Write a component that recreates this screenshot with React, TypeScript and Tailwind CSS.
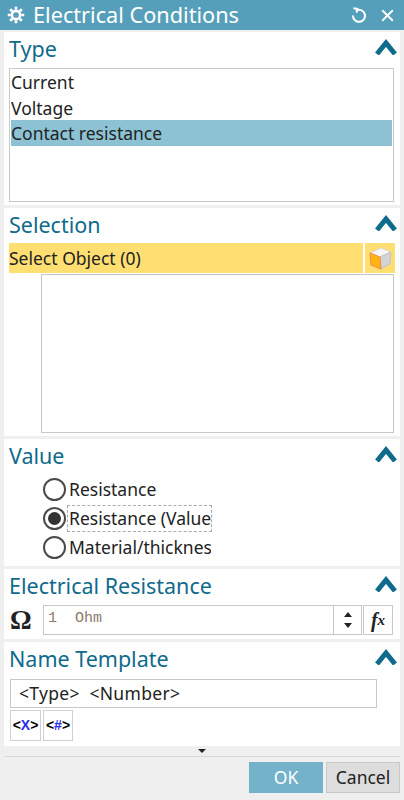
import { X } from "lucide-react";

const FONT = "font-['Noto_Sans','Open_Sans',sans-serif]";

function Chevron() {
  return (
    <svg width="22" height="16" viewBox="0 0 22 16" className="mb-[3px] shrink-0">
      <path d="M2 15 L11 4 L20 15" fill="none" stroke="#0f6a8c" strokeWidth="5" />
    </svg>
  );
}

function Gear() {
  return (
    <svg width="18" height="18" viewBox="0 0 24 24" fill="none" stroke="#fff" strokeWidth="3.4">
      <circle cx="12" cy="12" r="5.5" />
      <path
        d="M12 1v4M12 19v4M1 12h4M19 12h4M4.2 4.2l2.9 2.9M16.9 16.9l2.9 2.9M4.2 19.8l2.9-2.9M16.9 7.1l2.9-2.9"
        strokeWidth="3.6"
      />
    </svg>
  );
}

function ResetIcon() {
  return (
    <svg width="16" height="16" viewBox="0 0 16 16" fill="none" stroke="#fff" strokeWidth="2">
      <path d="M5 3.6 A6 6 0 1 1 2 8.5" />
      <path d="M2.2 1.6 L6 1.6 L6 5.4" transform="rotate(8 5 3)" />
    </svg>
  );
}

function Cube() {
  return (
    <svg width="24" height="24" viewBox="0 0 24 24">
      <path d="M2 7 L13 2 L23 6 L12 11 Z" fill="#f6f6f6" stroke="#cfcfcf" strokeWidth="0.8" />
      <path d="M12 11 L23 6 L22 18 L13 23 Z" fill="#d3d3d6" stroke="#bdbdc0" strokeWidth="0.8" />
      <path d="M2 7 L12 11 L13 23 L3 19 Z" fill="#ffb416" stroke="#f58a3c" strokeWidth="1" />
    </svg>
  );
}

function Panel({
  title,
  h,
  children,
}: {
  title: string;
  h: string;
  children: React.ReactNode;
}) {
  return (
    <section className={`mx-[4px] bg-white ${h}`}>
      <div className="flex h-[33px] items-center justify-between pl-[5px] pr-[3px]">
        <span className="text-[21.5px] leading-none text-[#0f6a8c]">{title}</span>
        <Chevron />
      </div>
      {children}
    </section>
  );
}

function Radio({ label, checked }: { label: string; checked?: boolean }) {
  return (
    <div className="flex h-[29px] items-center">
      <span className="flex h-[23px] w-[23px] shrink-0 items-center justify-center rounded-full border-2 border-[#4a4a4a] bg-white">
        {checked && <span className="h-[13px] w-[13px] rounded-full bg-[#333]" />}
      </span>
      <span
        className={`ml-[1px] flex h-[27px] w-[145px] items-center overflow-hidden whitespace-nowrap pl-[1px] text-[17.5px] text-[#222] ${
          checked ? "border border-dashed border-[#aaa]" : "border border-transparent"
        }`}
      >
        {label}
      </span>
    </div>
  );
}

export default function App() {
  return (
    <div className={`flex h-[800px] w-[404px] flex-col overflow-hidden bg-[#efefef] ${FONT}`}>
      <header className="flex h-[30px] items-center bg-[#569fba] pl-[7px] pr-[7px] text-white">
        <Gear />
        <span className="ml-[8px] text-[21.7px] leading-none">Electrical Conditions</span>
        <div className="ml-auto flex items-center gap-[11px]">
          <ResetIcon />
          <X size={19} strokeWidth={2.4} />
        </div>
      </header>

      <div className="mt-[2px] flex flex-col gap-[3px]">
        <Panel title="Type" h="h-[173px]">
          <div className="mx-[5px] mt-[3px] h-[134px] w-[385px] border border-[#c8c8c8] px-[1px] text-[17.5px] leading-[26px] text-[#222]">
            <div>Current</div>
            <div>Voltage</div>
            <div className="-mt-[1px] bg-[#8cc2d3]">Contact resistance</div>
          </div>
        </Panel>

        <Panel title="Selection" h="h-[228px]">
          <div className="ml-[5px] mt-[2px] flex h-[30px] w-[386px] gap-[2px]">
            <div className="flex flex-1 items-center bg-[#ffdf72] text-[17.5px] text-[#222]">
              Select Object (0)
            </div>
            <div className="flex w-[30px] items-center justify-center bg-[#ffdf72]">
              <Cube />
            </div>
          </div>
          <div className="ml-[37px] mt-[1px] h-[159px] w-[353px] border border-[#c8c8c8]" />
        </Panel>

        <Panel title="Value" h="h-[127px]">
          <div className="ml-[39px] mt-[3px] flex flex-col">
            <Radio label="Resistance" />
            <Radio label="Resistance (Value" checked />
            <Radio label="Material/thicknes" />
          </div>
        </Panel>

        <Panel title="Electrical Resistance" h="h-[70px]">
          <div className="mt-[3px] flex h-[30px] items-center">
            <span className="w-[39px] pl-[6px] font-['Liberation_Serif',serif] text-[27px] font-bold leading-none text-[#222]">
              Ω
            </span>
            <div className="flex h-[30px] w-[319px] border border-[#c8c8c8]">
              <span className="flex-1 whitespace-pre pl-[4px] font-['Liberation_Mono',monospace] text-[15px] leading-[26px] text-[#8a7a6a]">
                {"1  Ohm"}
              </span>
              <div className="flex w-[28px] flex-col items-center justify-center gap-[6px] border-l border-[#c8c8c8]">
                <span className="h-0 w-0 border-x-[4px] border-b-[5px] border-x-transparent border-b-[#222]" />
                <span className="h-0 w-0 border-x-[4px] border-t-[5px] border-x-transparent border-t-[#222]" />
              </div>
            </div>
            <button
              type="button"
              className="ml-[1px] flex h-[30px] w-[30px] items-center justify-center border border-[#c8c8c8] bg-white font-['Liberation_Serif',serif] text-[20px] font-bold italic leading-none text-[#222]"
            >
              f<span className="text-[15px]">x</span>
            </button>
          </div>
        </Panel>

        <Panel title="Name Template" h="h-[104px]">
          <div className="ml-[6px] mt-[4px] flex h-[29px] w-[367px] items-center whitespace-pre border border-[#c8c8c8] pl-[8px] text-[17.5px] tracking-[0.3px] text-[#222]">
            {"<Type>  <Number>"}
          </div>
          <div className="ml-[6px] mt-[2px] flex gap-[2px]">
            <button
              type="button"
              className="flex h-[31px] w-[31px] items-center justify-center border border-[#d0d0d0] bg-white font-['Liberation_Sans',sans-serif] text-[14px] font-bold"
            >
              <span className="text-black">{"<"}</span>
              <span className="text-[#2a2af0]">X</span>
              <span className="text-black">{">"}</span>
            </button>
            <button
              type="button"
              className="flex h-[31px] w-[30px] items-center justify-center border border-[#d0d0d0] bg-white font-['Liberation_Sans',sans-serif] text-[14px] font-bold"
            >
              <span className="text-black">{"<"}</span>
              <span className="text-[#2a2af0]">#</span>
              <span className="text-black">{">"}</span>
            </button>
          </div>
        </Panel>
      </div>

      <div className="mx-[4px] flex h-[11px] items-center justify-center border-b border-[#d8d8d8]">
        <span className="h-0 w-0 border-x-[4px] border-t-[4px] border-x-transparent border-t-[#222]" />
      </div>

      <footer className="mr-[4px] mt-[5px] flex justify-end gap-[3px] text-[17.5px]">
        <button type="button" className="h-[31px] w-[74px] bg-[#74b2ca] text-white">
          OK
        </button>
        <button
          type="button"
          className="h-[31px] w-[74px] border border-[#c8c8c8] bg-[#dddddd] text-[#222]"
        >
          Cancel
        </button>
      </footer>
    </div>
  );
}
